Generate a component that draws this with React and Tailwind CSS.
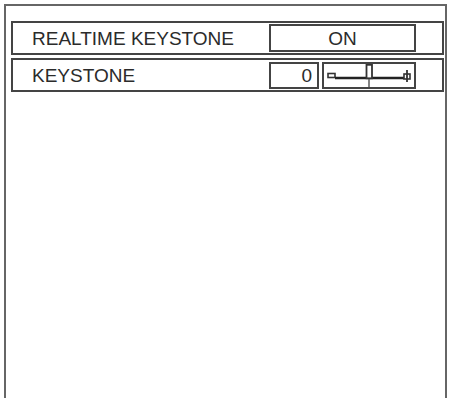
const Slider = () => (
  <svg width="90" height="23" viewBox="0 0 90 23" className="block">
    {/* minus end */}
    <rect x="4" y="9.5" width="7" height="4" fill="white" stroke="#333" strokeWidth="1.6" />
    {/* track */}
    <line x1="11" y1="14" x2="80" y2="14" stroke="#222" strokeWidth="2.5" />
    {/* thumb */}
    <line x1="45" y1="15" x2="45" y2="23" stroke="#777" strokeWidth="1.8" />
    <rect x="42.5" y="0.8" width="5.5" height="13.5" fill="white" stroke="#333" strokeWidth="1.8" />
    {/* plus end */}
    <rect x="80" y="10" width="6" height="5" fill="white" stroke="#333" strokeWidth="1.6" />
    <line x1="83" y1="6" x2="83" y2="18" stroke="#333" strokeWidth="1.8" />
  </svg>
);

const Row = ({ label, children }) => (
  <div className="flex items-center h-[34px] border-2 border-[#444]">
    <span className="flex-1 pl-[19px] text-[19px] leading-none text-[#2b2b2b]">{label}</span>
    <div className="flex items-center gap-[3px] pr-[26px]">{children}</div>
  </div>
);

export default function App() {
  return (
    <div
      className="w-[451px] h-[398px] overflow-hidden bg-white pt-[4px] pl-[4px]"
      style={{ fontFamily: '"Liberation Sans", Arial, sans-serif' }}
    >
      <div className="w-[443px] h-[420px] border-2 border-b-0 border-[#666] pt-[15px] pl-[5px] pr-[1px]">
        <div className="flex flex-col gap-[3px]">
          <Row label="REALTIME KEYSTONE">
            <div className="w-[147px] h-[28px] border-2 border-[#444] flex items-center justify-center text-[19px] leading-none text-[#2b2b2b]">
              ON
            </div>
          </Row>
          <Row label="KEYSTONE">
            <div className="w-[50px] h-[27px] border-2 border-[#444] flex items-center justify-end pr-[5px] text-[19px] leading-none text-[#2b2b2b]">
              0
            </div>
            <div className="w-[94px] h-[27px] border-2 border-[#444] flex items-center justify-center">
              <Slider />
            </div>
          </Row>
        </div>
      </div>
    </div>
  );
}
